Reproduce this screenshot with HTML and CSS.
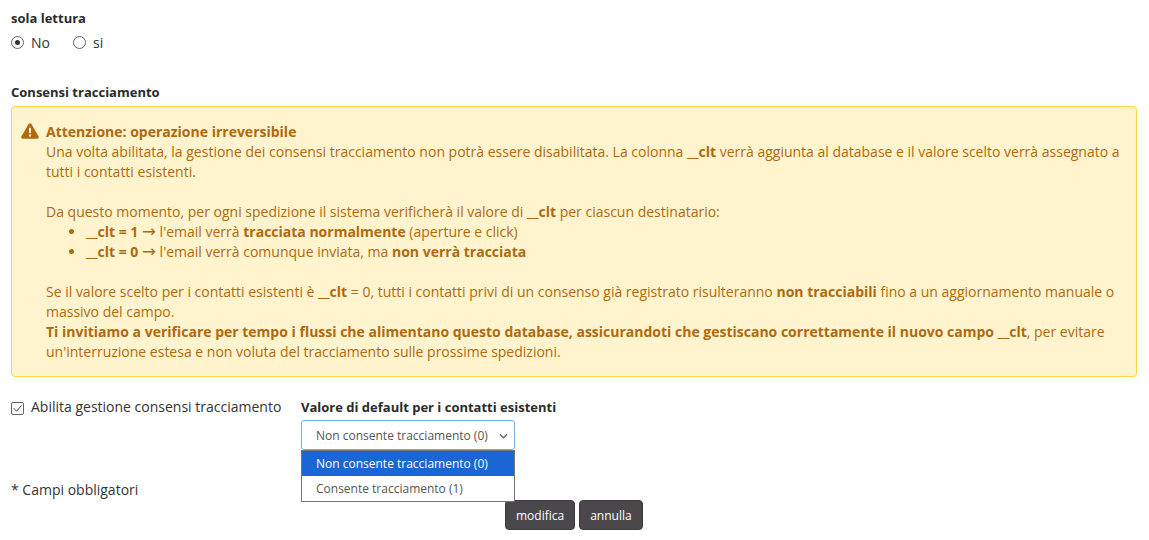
FILE: index.html
```html
<!DOCTYPE html>
<html lang="it">
<head>
<meta charset="UTF-8">
<title>Consensi tracciamento</title>
<link rel="stylesheet" href="styles.css">
</head>
<body>
<form class="form">
    <div class="label sola-lettura">sola lettura</div>
    <div class="radios">
        <span class="radio radio-on"></span><span class="radio-text">No</span>
        <span class="radio"></span><span class="radio-text">si</span>
    </div>

    <div class="label consensi">Consensi tracciamento</div>
    <div class="alert">
        <svg class="alert-icon" viewBox="0 0 18 16">
            <path fill="#b0690e" d="M9 0.3c.6 0 1.1.3 1.4.8l7.2 12.4c.6 1.1-.2 2.3-1.4 2.3H1.8C.6 15.8-.2 14.600.4 13.500L7.600 1.100C7.900.6 8.400.3 9 .3z"/>
            <rect x="8" y="4.800" width="2" height="5.400" fill="#fff4cd"/>
            <rect x="8" y="11.500" width="2" height="2" fill="#fff4cd"/>
        </svg>
        <div class="alert-body">
            <strong>Attenzione: operazione irreversibile</strong><br>
            Una volta abilitata, la gestione dei consensi tracciamento non potrà essere disabilitata. La colonna <strong>__clt</strong> verrà aggiunta al database e il valore scelto verrà assegnato a tutti i contatti esistenti.<br><br>
            Da questo momento, per ogni spedizione il sistema verificherà il valore di <strong>__clt</strong> per ciascun destinatario:
            <ul>
                <li><strong>__clt = 1</strong> <span class="arrow">→</span> l'email verrà <strong>tracciata normalmente</strong> (aperture e click)</li>
                <li><strong>__clt = 0</strong> <span class="arrow">→</span> l'email verrà comunque inviata, ma <strong>non verrà tracciata</strong></li>
            </ul>
            <br>
            Se il valore scelto per i contatti esistenti è <strong>__clt</strong> = 0, tutti i contatti privi di un consenso già registrato risulteranno <strong>non tracciabili</strong> fino a un aggiornamento manuale o massivo del campo.<br>
            <strong>Ti invitiamo a verificare per tempo i flussi che alimentano questo database, assicurandoti che gestiscano correttamente il nuovo campo __clt</strong>, per evitare un'interruzione estesa e non voluta del tracciamento sulle prossime spedizioni.
        </div>
    </div>

    <div class="abilita-row">
        <div class="check-wrap">
            <span class="check">
                <svg viewBox="0 0 14 14"><path d="M2 6.500l4 4 6-7.500" fill="none" stroke="#444" stroke-width="1.200"/></svg>
            </span>
            <span>Abilita gestione consensi tracciamento</span>
        </div>
        <div class="default-col">
            <div class="label">Valore di default per i contatti esistenti</div>
            <div class="select">
                <span>Non consente tracciamento (0)</span>
                <svg class="chevron" viewBox="0 0 10 6"><path d="M1 1l4 4 4-4" fill="none" stroke="#666" stroke-width="1.400"/></svg>
                <div class="select-menu">
                    <div class="option option-on">Non consente tracciamento (0)</div>
                    <div class="option">Consente tracciamento (1)</div>
                </div>
            </div>
        </div>
    </div>

    <div class="obbligatori">* Campi obbligatori</div>
    <div class="buttons">
        <button type="button" class="btn">modifica</button>
        <button type="button" class="btn">annulla</button>
    </div>
</form>
</body>
</html>
```

FILE: styles.css
```css
body, html {
    margin: 0;
    padding: 0;
    height: 100%;
    background-color: #fff;
    overflow: hidden;
    font-family: "Open Sans", "Noto Sans", sans-serif;
    font-size: 14px;
    color: #333;
}
.form {
    padding: 0 12px 0 11px;
}
.label {
    font-size: 13px;
    font-weight: 700;
    color: #2b2b2b;
    line-height: 18px;
}
.sola-lettura {
    padding-top: 9px;
}
.radios {
    display: flex;
    align-items: center;
    height: 20px;
    margin-top: 5px;
}
.radio {
    width: 11px;
    height: 11px;
    border: 1px solid #666;
    border-radius: 50%;
    position: relative;
    margin-right: 7px;
}
.radio-on::after {
    content: "";
    position: absolute;
    top: 3px;
    left: 3px;
    width: 5px;
    height: 5px;
    border-radius: 50%;
    background-color: #333;
}
.radio-text {
    margin-right: 23px;
}
.consensi {
    margin-top: 31px;
}
.alert {
    display: flex;
    margin-top: 5px;
    padding: 15px 15px 14px 9px;
    background-color: #fff4cd;
    border: 1px solid #ffd83d;
    border-radius: 4px;
    color: #b0690e;
    line-height: 20px;
}
.alert-icon {
    flex: none;
    width: 18px;
    height: 16px;
    margin: 1px 7px 0 0;
}
.alert ul {
    margin: 0;
    padding-left: 40px;
}
.arrow {
    font-family: "DejaVu Sans", sans-serif;
    font-size: 16.7px;
    line-height: 1;
}
.abilita-row {
    display: flex;
    margin-top: 20px;
}
.check-wrap {
    display: flex;
    align-items: center;
    height: 18px;
    width: 290px;
}
.check {
    width: 11px;
    height: 11px;
    margin-top: 4px;
    border: 1px solid #666;
    border-radius: 2px;
    margin-right: 7px;
    display: flex;
}
.check svg {
    width: 11px;
    height: 11px;
}
.default-col .label {
    line-height: 20px;
}
.select {
    position: relative;
    box-sizing: border-box;
    width: 214px;
    height: 30px;
    margin-top: 3px;
    padding-left: 14px;
    border: 1px solid #6fb3e8;
    border-radius: 3px;
    font-size: 12px;
    line-height: 30px;
    color: #555;
}
.chevron {
    position: absolute;
    right: 6px;
    top: 12px;
    width: 9px;
    height: 6px;
}
.select-menu {
    position: absolute;
    top: 29px;
    left: -1px;
    box-sizing: border-box;
    width: 214px;
    background-color: #fff;
    border: 1px solid #767676;
    line-height: 25px;
}
.option {
    height: 25px;
    padding-left: 14px;
}
.option-on {
    background-color: #1a66d4;
    color: #fff;
}
.obbligatori {
    margin-top: 30px;
    line-height: 20px;
}
.buttons {
    display: flex;
    justify-content: flex-start;
    gap: 4px;
    margin: 0 0 0 494px;
}
.btn {
    height: 30px;
    padding: 0 10px;
    border: 1px solid #3c3c3c;
    border-radius: 4px;
    background-color: #4a484a;
    color: #fff;
    font-family: inherit;
    font-size: 12px;
}
```
